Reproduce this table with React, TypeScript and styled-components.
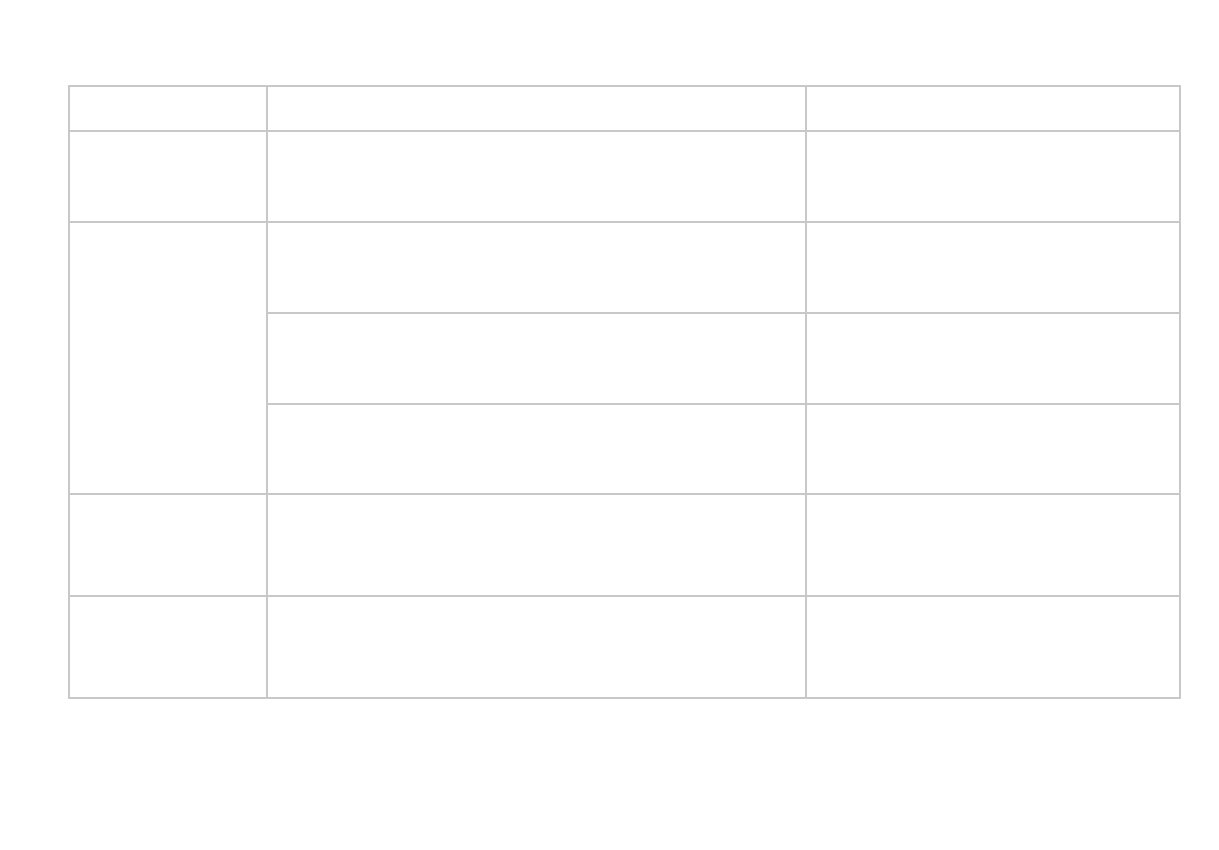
import React from 'react'
import styled, { createGlobalStyle } from 'styled-components'

const GlobalStyle = createGlobalStyle`
  html, body {
    margin: 0;
    padding: 0;
    background: #ffffff;
    font-family: 'Liberation Sans', Arial, sans-serif;
  }
`

const LINE = '#c8c8c8'

const Page = styled.div`
  padding: 85px 0 0 68px;
`

const Grid = styled.div`
  display: grid;
  width: 1113px;
  box-sizing: border-box;
  grid-template-columns: 198px 539px 374px;
  grid-template-rows: 45px 91px 91px 91px 90px 102px 102px;
  border-top: 2px solid ${LINE};
  border-left: 2px solid ${LINE};
`

const Cell = styled.div<{ span?: number }>`
  box-sizing: border-box;
  border-right: 2px solid ${LINE};
  border-bottom: 2px solid ${LINE};
  font-size: 14px;
  color: #333;
  ${({ span }) => (span ? `grid-row: span ${span};` : '')}
`

type Row = { group?: number }

// first column cell spans the rows of its group
const layout: Row[] = [{ group: 1 }, { group: 1 }, { group: 3 }, {}, {}, { group: 1 }, { group: 1 }]

const App: React.FC = () => {
  return (
    <>
      <GlobalStyle />
      <Page>
        <Grid>
          {layout.map((row, i) => (
            <React.Fragment key={i}>
              {row.group ? <Cell span={row.group > 1 ? row.group : undefined} /> : null}
              <Cell />
              <Cell />
            </React.Fragment>
          ))}
        </Grid>
      </Page>
    </>
  )
}

export default App
